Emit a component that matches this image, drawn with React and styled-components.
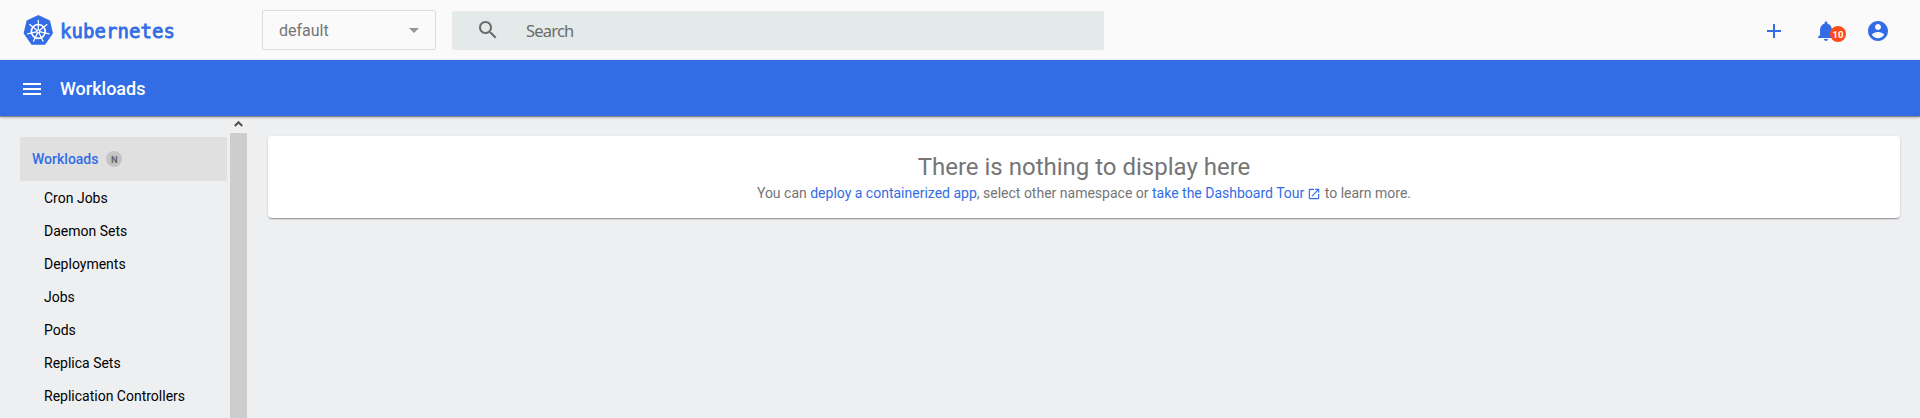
import React from 'react';
import styled, { createGlobalStyle } from 'styled-components';

const BLUE = '#326de6';

const GlobalStyle = createGlobalStyle`
  * { box-sizing: border-box; }
  html, body { margin: 0; height: 100%; overflow: hidden; }
  body {
    background: #eeeff1;
    font-family: Roboto, "Liberation Sans", sans-serif;
    font-size: 14px;
    color: rgba(0, 0, 0, 0.87);
  }
`;

const Page = styled.div`
  display: flex;
  flex-direction: column;
  height: 100vh;
`;

const Header = styled.header`
  flex: none;
  display: flex;
  align-items: center;
  height: 60px;
  padding: 0 28px 0 23px;
  background: #fafafa;
`;

const Brand = styled.a`
  display: flex;
  align-items: center;
  gap: 6px;
  width: 239px;
`;

const BrandName = styled.span`
  font: 400 19px/28px "DejaVu Sans Mono", monospace;
  letter-spacing: 0.06px;
  padding-top: 1px;
  -webkit-text-stroke: 0.8px ${BLUE};
  color: ${BLUE};
`;

const NamespaceSelect = styled.div`
  display: flex;
  align-items: center;
  justify-content: space-between;
  width: 174px;
  height: 40px;
  padding: 0 16px;
  border: 1px solid #dcdcdc;
  border-radius: 2px;
  font-size: 16px;
  color: #757575;
`;

const Arrow = styled.span`
  border: 5px solid transparent;
  border-top-color: #959595;
  border-bottom: 0;
  margin-top: 1px;
`;

const SearchBox = styled.div`
  display: flex;
  align-items: center;
  gap: 26px;
  width: 652px;
  height: 39px;
  margin: 1px 0 0 16px;
  padding-left: 24px;
  border-radius: 2px;
  background: #e4e9e9;
  color: #6a6c6c;

  svg { margin-bottom: 1px; }
`;

const SearchText = styled.span`
  font: 400 16.5px/24px "Noto Sans", sans-serif;
  letter-spacing: -0.8px;
`;

const Actions = styled.div`
  display: flex;
  gap: 28px;
  margin: 2px 2px 0 auto;
  color: ${BLUE};
`;

const Action = styled.div`
  position: relative;
  display: flex;
`;

const Count = styled.span`
  position: absolute;
  left: 16px;
  top: 7px;
  width: 16px;
  height: 16px;
  border-radius: 50%;
  background: #ff4a1c;
  color: #fff;
  font-size: 9.5px;
  font-weight: 700;
  line-height: 17px;
  text-align: center;
`;

const TitleBar = styled.div`
  flex: none;
  position: relative;
  display: flex;
  align-items: center;
  gap: 16px;
  height: 56px;
  padding: 0 20px;
  background: ${BLUE};
  color: #fff;
  font-size: 18px;
  font-weight: 500;
  box-shadow: 0 1px 3px rgba(0, 0, 0, 0.3), 0 1px 1px rgba(0, 0, 0, 0.3);

  svg { margin-top: 2px; }
`;

const Body = styled.div`
  flex: 1;
  display: flex;
  min-height: 0;
`;

const Sidebar = styled.nav`
  width: 230px;
  padding: 21px 3px 0 20px;
  overflow: hidden;
`;

const SectionItem = styled.div`
  display: flex;
  align-items: center;
  gap: 8px;
  height: 44px;
  margin-bottom: 1px;
  padding-left: 12px;
  border-radius: 2px;
  background: #e0e0e0;
  color: ${BLUE};
  font-weight: 500;
`;

const Tag = styled.span`
  width: 16px;
  height: 16px;
  border-radius: 50%;
  background: #c4c4c4;
  color: #666;
  font-size: 9.5px;
  font-weight: 700;
  line-height: 17px;
  text-align: center;
`;

const NavItem = styled.div`
  height: 33px;
  padding-left: 24px;
  line-height: 33px;
  color: #000;
`;

const ScrollTrack = styled.div`
  display: flex;
  flex-direction: column;
  width: 17px;
`;

const ScrollUp = styled.div`
  flex: none;
  height: 17px;
  background: #f0f0f0;

  svg { display: block; }
`;

const ScrollThumb = styled.div`
  flex: 1;
  background: #cdcdcd;
`;

const Main = styled.main`
  flex: 1;
  padding: 20px 20px 0 21px;
`;

const Card = styled.section`
  height: 82px;
  padding-top: 15px;
  border-radius: 4px;
  background: #fff;
  color: #757575;
  text-align: center;
  box-shadow: 0 2px 1px -1px rgba(0, 0, 0, 0.2), 0 1px 1px rgba(0, 0, 0, 0.14),
    0 1px 3px rgba(0, 0, 0, 0.12);
`;

const Headline = styled.div`
  font-size: 24px;
  line-height: 32px;
`;

const Hint = styled.div`
  line-height: 20px;
`;

const Link = styled.a`
  color: ${BLUE};

  svg {
    margin-left: 3px;
    vertical-align: -3px;
  }
`;

const Icon = ({ d, size = 24 }) => (
  <svg width={size} height={size} viewBox="0 0 24 24" fill="currentColor">
    <path d={d} />
  </svg>
);

const icons = {
  search:
    'M15.5 14h-.79l-.28-.27C15.41 12.59 16 11.11 16 9.5 16 5.91 13.09 3 9.5 3S3 5.91 3 9.5 5.91 16 9.5 16c1.61 0 3.09-.59 4.23-1.57l.27.28v.79l5 4.99L20.49 19l-4.99-5zm-6 0C7.01 14 5 11.99 5 9.5S7.01 5 9.5 5 14 7.01 14 9.5 11.99 14 9.5 14z',
  add: 'M19 13h-6v6h-2v-6H5v-2h6V5h2v6h6v2z',
  bell: 'M12 22c1.1 0 2-.9 2-2h-4c0 1.1.89 2 2 2zm6-6v-5c0-3.07-1.64-5.64-4.5-6.32V4c0-.83-.67-1.5-1.5-1.5s-1.5.67-1.5 1.5v.68C7.63 5.36 6 7.92 6 11v5l-2 2v1h16v-1l-2-2z',
  account:
    'M12 2C6.48 2 2 6.48 2 12s4.48 10 10 10 10-4.48 10-10S17.52 2 12 2zm0 3c1.66 0 3 1.34 3 3s-1.34 3-3 3-3-1.34-3-3 1.34-3 3-3zm0 14.2c-2.5 0-4.71-1.28-6-3.22.03-1.99 4-3.08 6-3.08 1.99 0 5.97 1.09 6 3.08-1.29 1.94-3.5 3.22-6 3.22z',
  menu: 'M3 18h18v-2H3v2zm0-5h18v-2H3v2zm0-7v2h18V6H3z',
  open: 'M19 19H5V5h7V3H5c-1.11 0-2 .9-2 2v14c0 1.1.89 2 2 2h14c1.1 0 2-.9 2-2v-7h-2v7zM14 3v2h3.59l-9.83 9.83 1.41 1.41L19 6.41V10h2V3h-7z',
};

const spokes = Array.from({ length: 7 }, (_, i) => (i * 360) / 7);

const Logo = () => (
  <svg width="31" height="31" viewBox="0 0 31 31">
    <path
      d="M15.3 1.4 L25.9 6.4 L28.7 18 L21.4 28.6 L9.2 28.6 L1.9 18 L4.7 6.4 Z"
      fill={BLUE}
      stroke={BLUE}
      strokeWidth="2.4"
      strokeLinejoin="round"
    />
    <g fill="none" stroke="#fff" strokeLinecap="round">
      <circle cx="15.3" cy="16.4" r="6.9" strokeWidth="1.7" />
      {spokes.map((a) => (
        <path key={a} d="M15.3 14.2 V5.4" strokeWidth="1.2" transform={`rotate(${a} 15.3 16.4)`} />
      ))}
    </g>
    <circle cx="15.3" cy="16.4" r="2.2" fill="#fff" />
    <circle cx="15.3" cy="16.4" r="0.8" fill={BLUE} />
  </svg>
);

const workloads = [
  'Cron Jobs',
  'Daemon Sets',
  'Deployments',
  'Jobs',
  'Pods',
  'Replica Sets',
  'Replication Controllers',
];

export default function App() {
  return (
    <Page>
      <GlobalStyle />
      <Header>
        <Brand>
          <Logo />
          <BrandName>kubernetes</BrandName>
        </Brand>
        <NamespaceSelect>
          default
          <Arrow />
        </NamespaceSelect>
        <SearchBox>
          <Icon d={icons.search} />
          <SearchText>Search</SearchText>
        </SearchBox>
        <Actions>
          <Action><Icon d={icons.add} /></Action>
          <Action>
            <Icon d={icons.bell} />
            <Count>10</Count>
          </Action>
          <Action><Icon d={icons.account} /></Action>
        </Actions>
      </Header>
      <TitleBar>
        <Icon d={icons.menu} />
        Workloads
      </TitleBar>
      <Body>
        <Sidebar>
          <SectionItem>
            Workloads
            <Tag>N</Tag>
          </SectionItem>
          {workloads.map((name) => (
            <NavItem key={name}>{name}</NavItem>
          ))}
        </Sidebar>
        <ScrollTrack>
          <ScrollUp>
            <svg width="17" height="17" viewBox="0 0 17 17">
              <path d="M4.8 10 L8.5 6.3 L12.2 10" fill="none" stroke="#555" strokeWidth="2.2" />
            </svg>
          </ScrollUp>
          <ScrollThumb />
        </ScrollTrack>
        <Main>
          <Card>
            <Headline>There is nothing to display here</Headline>
            <Hint>
              You can <Link>deploy a containerized app</Link>, select other namespace or{' '}
              <Link>
                take the Dashboard Tour
                <Icon d={icons.open} size={14} />
              </Link>{' '}
              to learn more.
            </Hint>
          </Card>
        </Main>
      </Body>
    </Page>
  );
}
